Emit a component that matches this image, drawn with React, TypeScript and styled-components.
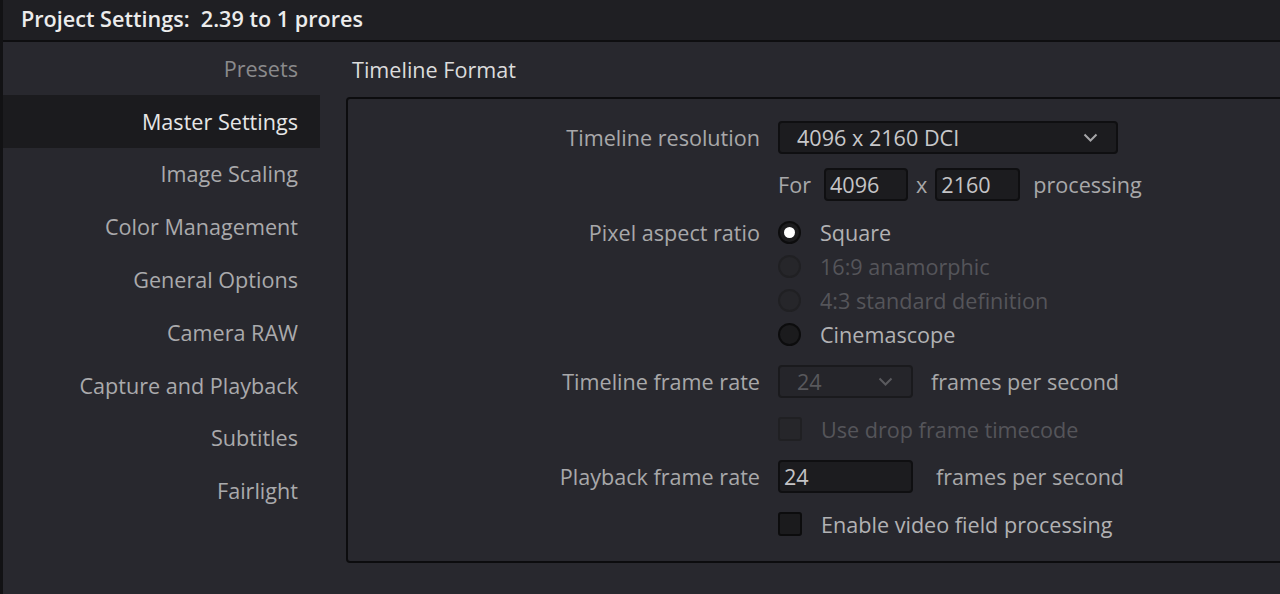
import React from 'react';
import styled, { createGlobalStyle, css } from 'styled-components';

const GlobalStyle = createGlobalStyle`
  html, body {
    margin: 0;
    padding: 0;
    background: #28282e;
    font-family: 'Open Sans', 'Noto Sans', sans-serif;
    -webkit-font-smoothing: antialiased;
  }
  * { box-sizing: border-box; }
`;

const FONT = '21.6px';

const Window = styled.div`
  height: 594px;
  overflow: hidden;
  border-left: 3px solid #121214;
  background: #28282e;
  display: flex;
  flex-direction: column;
`;

const TitleBar = styled.header`
  height: 42px;
  flex-shrink: 0;
  display: flex;
  align-items: center;
  padding-left: 18px;
  padding-bottom: 4px;
  background: #1f1f23;
  border-bottom: 2px solid #0e0e10;
  color: #ececec;
  font-size: ${FONT};
  font-weight: 600;
  white-space: pre;
`;

const Body = styled.div`
  flex: 1;
  display: flex;
  min-height: 0;
`;

const Sidebar = styled.nav`
  width: 317px;
  flex-shrink: 0;
  display: flex;
  flex-direction: column;
`;

const NavItem = styled.div<{ $active?: boolean; $muted?: boolean }>`
  height: 52.8px;
  display: flex;
  align-items: center;
  justify-content: flex-end;
  padding-right: 22px;
  font-size: ${FONT};
  color: ${p => (p.$muted ? '#8a8a8c' : '#aaaaac')};
  ${p =>
    p.$active &&
    css`
      background: #1b1b1e;
      color: #e6e6e6;
    `}
`;

const Content = styled.section`
  flex: 1;
  display: flex;
  flex-direction: column;
  padding-left: 26px;
  padding-bottom: 31px;
`;

const SectionTitle = styled.h2`
  margin: 0;
  height: 55px;
  display: flex;
  align-items: center;
  padding-left: 6px;
  font-size: ${FONT};
  font-weight: 400;
  color: #dcdcdc;
`;

const Panel = styled.div`
  flex: 1;
  margin-right: -10px;
  border: 2px solid #0c0c0e;
  border-radius: 4px;
`;

const Form = styled.div`
  display: grid;
  grid-template-columns: 412px auto;
  column-gap: 18px;
  row-gap: 13.5px;
  padding-top: 21px;
  align-items: start;
`;

const Label = styled.div`
  height: 34px;
  display: flex;
  align-items: center;
  justify-content: flex-end;
  font-size: ${FONT};
  color: #a8a8aa;
  white-space: nowrap;
`;

const Line = styled.div<{ $gap?: number }>`
  height: 34px;
  display: flex;
  align-items: center;
  gap: ${p => p.$gap ?? 18}px;
  font-size: ${FONT};
  color: #a8a8aa;
  white-space: nowrap;
`;

const Times = styled.span`
  margin: 0 -5px;
`;

const Select = styled.div<{ $width: number; $disabled?: boolean }>`
  width: ${p => p.$width}px;
  height: 33px;
  display: flex;
  align-items: center;
  justify-content: space-between;
  padding: 0 18px 0 17px;
  background: ${p => (p.$disabled ? '#25252a' : '#1c1c1f')};
  border: 2px solid ${p => (p.$disabled ? '#1a1a1d' : '#0f0f11')};
  border-radius: 4px;
  font-size: ${FONT};
  color: ${p => (p.$disabled ? '#58585c' : '#c8c8ca')};
`;

const Input = styled.div<{ $width: number }>`
  width: ${p => p.$width}px;
  height: 33px;
  display: flex;
  align-items: center;
  padding-left: 4px;
  background: #1c1c1f;
  border: 2px solid #0f0f11;
  border-radius: 4px;
  font-size: ${FONT};
  color: #c4c4c6;
`;

const RadioGroup = styled.div`
  display: flex;
  flex-direction: column;
`;

const Choice = styled.div<{ $disabled?: boolean }>`
  height: 34px;
  display: flex;
  align-items: center;
  gap: 19px;
  font-size: ${FONT};
  color: ${p => (p.$disabled ? '#55555a' : '#b2b2b4')};
  white-space: nowrap;
`;

const RadioDot = styled.span<{ $checked?: boolean; $disabled?: boolean }>`
  width: 23px;
  height: 23px;
  flex-shrink: 0;
  border-radius: 50%;
  display: flex;
  align-items: center;
  justify-content: center;
  background: ${p => (p.$disabled ? '#26262a' : '#1b1b1d')};
  border: 2px solid ${p => (p.$disabled ? '#202023' : '#0c0c0d')};
  &::after {
    content: '';
    display: ${p => (p.$checked ? 'block' : 'none')};
    width: 11px;
    height: 11px;
    border-radius: 50%;
    background: #ffffff;
  }
`;

const CheckBox = styled.span<{ $disabled?: boolean }>`
  width: 24px;
  height: 24px;
  flex-shrink: 0;
  border-radius: 3px;
  background: ${p => (p.$disabled ? '#26262a' : '#1b1b1d')};
  border: 2px solid ${p => (p.$disabled ? '#202023' : '#0c0c0d')};
`;

const Chevron = ({ color = '#a6a6a8' }: { color?: string }) => (
  <svg width="15" height="9" viewBox="0 0 15 9">
    <polyline points="1.5,1.5 7.5,7.5 13.5,1.5" fill="none" stroke={color} strokeWidth="2" />
  </svg>
);

const navItems = [
  'Presets',
  'Master Settings',
  'Image Scaling',
  'Color Management',
  'General Options',
  'Camera RAW',
  'Capture and Playback',
  'Subtitles',
  'Fairlight',
];

const ratios = [
  { label: 'Square', checked: true },
  { label: '16:9 anamorphic', disabled: true },
  { label: '4:3 standard definition', disabled: true },
  { label: 'Cinemascope' },
];

const App: React.FC = () => {
  return (
    <>
      <GlobalStyle />
      <Window>
        <TitleBar>Project Settings:  2.39 to 1 prores</TitleBar>
        <Body>
          <Sidebar>
            {navItems.map(item => (
              <NavItem key={item} $muted={item === 'Presets'} $active={item === 'Master Settings'}>
                {item}
              </NavItem>
            ))}
          </Sidebar>
          <Content>
            <SectionTitle>Timeline Format</SectionTitle>
            <Panel>
              <Form>
                <Label>Timeline resolution</Label>
                <Line>
                  <Select $width={340}>
                    4096 x 2160 DCI
                    <Chevron />
                  </Select>
                </Line>

                <div />
                <Line $gap={13}>
                  For
                  <Input $width={84}>4096</Input>
                  <Times>x</Times>
                  <Input $width={85}>2160</Input>
                  processing
                </Line>

                <Label>Pixel aspect ratio</Label>
                <RadioGroup>
                  {ratios.map(r => (
                    <Choice key={r.label} $disabled={r.disabled}>
                      <RadioDot $checked={r.checked} $disabled={r.disabled} />
                      {r.label}
                    </Choice>
                  ))}
                </RadioGroup>

                <Label>Timeline frame rate</Label>
                <Line>
                  <Select $width={135} $disabled>
                    24
                    <Chevron color="#5a5a5e" />
                  </Select>
                  frames per second
                </Line>

                <div />
                <Choice $disabled>
                  <CheckBox $disabled />
                  Use drop frame timecode
                </Choice>

                <Label>Playback frame rate</Label>
                <Line $gap={23}>
                  <Input $width={135}>24</Input>
                  frames per second
                </Line>

                <div />
                <Choice>
                  <CheckBox />
                  Enable video field processing
                </Choice>
              </Form>
            </Panel>
          </Content>
        </Body>
      </Window>
    </>
  );
};

export default App;
